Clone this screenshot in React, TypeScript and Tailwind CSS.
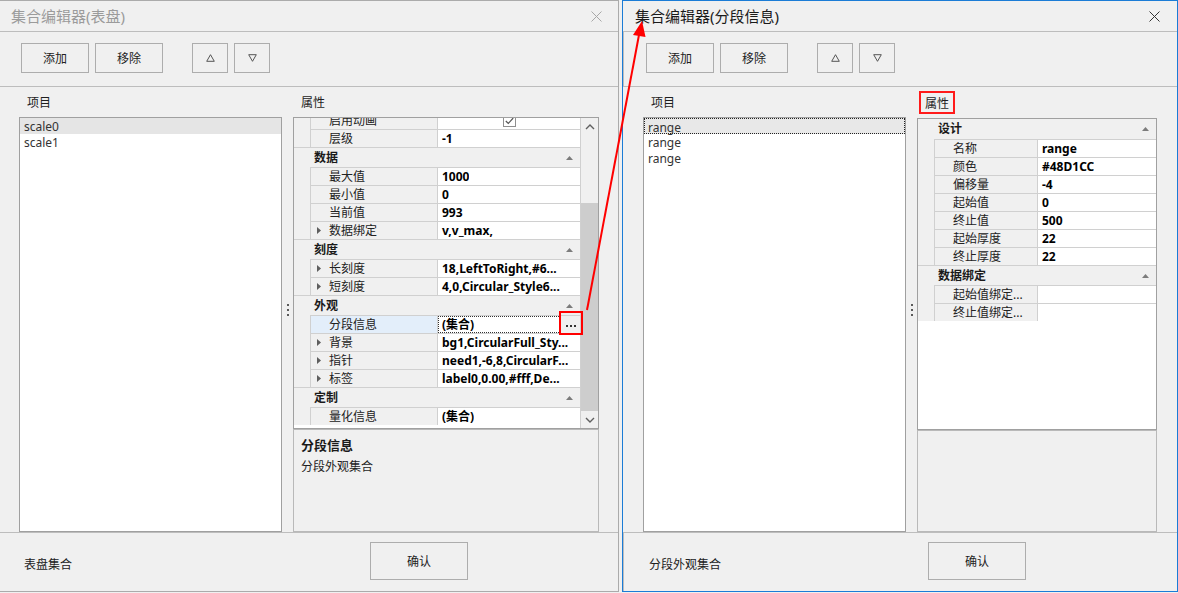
import React from "react";

type GridItem =
  | { t: "cat"; label: string }
  | {
      t: "row";
      name: string;
      value?: string;
      expand?: boolean;
      selected?: boolean;
      check?: boolean;
      ellipsis?: boolean;
    };

const leftItems: GridItem[] = [
  { t: "row", name: "启用动画", check: true },
  { t: "row", name: "层级", value: "-1" },
  { t: "cat", label: "数据" },
  { t: "row", name: "最大值", value: "1000" },
  { t: "row", name: "最小值", value: "0" },
  { t: "row", name: "当前值", value: "993" },
  { t: "row", name: "数据绑定", value: "v,v_max,", expand: true },
  { t: "cat", label: "刻度" },
  { t: "row", name: "长刻度", value: "18,LeftToRight,#6...", expand: true },
  { t: "row", name: "短刻度", value: "4,0,Circular_Style6...", expand: true },
  { t: "cat", label: "外观" },
  { t: "row", name: "分段信息", value: "(集合)", selected: true, ellipsis: true },
  { t: "row", name: "背景", value: "bg1,CircularFull_Sty...", expand: true },
  { t: "row", name: "指针", value: "need1,-6,8,CircularF...", expand: true },
  { t: "row", name: "标签", value: "label0,0.00,#fff,De...", expand: true },
  { t: "cat", label: "定制" },
  { t: "row", name: "量化信息", value: "(集合)" },
];

const rightItems: GridItem[] = [
  { t: "cat", label: "设计" },
  { t: "row", name: "名称", value: "range" },
  { t: "row", name: "颜色", value: "#48D1CC" },
  { t: "row", name: "偏移量", value: "-4" },
  { t: "row", name: "起始值", value: "0" },
  { t: "row", name: "终止值", value: "500" },
  { t: "row", name: "起始厚度", value: "22" },
  { t: "row", name: "终止厚度", value: "22" },
  { t: "cat", label: "数据绑定" },
  { t: "row", name: "起始值绑定...", value: "" },
  { t: "row", name: "终止值绑定...", value: "" },
];

function Caret() {
  return (
    <svg width="4" height="7" viewBox="0 0 4 7">
      <path d="M0 0 L4 3.5 L0 7Z" fill="#5e5e5e" />
    </svg>
  );
}

function CatArrow() {
  return (
    <svg width="7" height="4" viewBox="0 0 7 4">
      <path d="M0 4 L3.5 0 L7 4Z" fill="#7c7c7c" />
    </svg>
  );
}

function XIcon({ color }: { color: string }) {
  return (
    <svg width="11" height="11" viewBox="0 0 11 11">
      <path d="M0.5 0.5L10.5 10.5M10.5 0.5L0.5 10.5" stroke={color} strokeWidth="1" />
    </svg>
  );
}

function TriBtn({ up }: { up: boolean }) {
  return (
    <div className="w-[36px] h-[30px] border border-[#adadad] flex items-center justify-center">
      <svg width="9" height="8" viewBox="0 0 9 8">
        {up ? (
          <path d="M4.5 0.7 L8.3 7.3 L0.7 7.3Z" fill="none" stroke="#555" strokeWidth="1" />
        ) : (
          <path d="M0.7 0.7 L8.3 0.7 L4.5 7.3Z" fill="none" stroke="#555" strokeWidth="1" />
        )}
      </svg>
    </div>
  );
}

function TextBtn({ label }: { label: string }) {
  return (
    <div className="w-[68px] h-[30px] border border-[#adadad] flex items-center justify-center pt-[2px] text-[#222]">
      {label}
    </div>
  );
}

function Chevron({ up }: { up: boolean }) {
  return (
    <svg width="10" height="6" viewBox="0 0 10 6">
      <path
        d={up ? "M1 5 L5 1 L9 5" : "M1 1 L5 5 L9 1"}
        fill="none"
        stroke="#606060"
        strokeWidth="1.4"
      />
    </svg>
  );
}

function Dots() {
  return (
    <div className="flex flex-col items-center gap-[3px]">
      <div className="w-[2px] h-[2px] bg-[#5a5a5a]" />
      <div className="w-[2px] h-[2px] bg-[#5a5a5a]" />
      <div className="w-[2px] h-[2px] bg-[#5a5a5a]" />
    </div>
  );
}

function PropGrid({
  items,
  wide,
}: {
  items: GridItem[];
  wide: boolean;
}) {
  return (
    <div
      className={`h-[312px] shrink-0 border border-[#a0a0a0] bg-white flex overflow-hidden ${
        wide ? "" : "mt-[1px]"
      }`}
    >
      <div className="flex-1 min-w-0 overflow-hidden">
        <div className={wide ? "-mt-[7px]" : ""}>
          {items.map((it, i) => {
            if (it.t === "cat") {
              return (
                <div
                  key={i}
                  className={`h-[20px] bg-[#f0f0f0] flex items-center justify-between pl-[20px] pr-[7px] font-bold text-[#1a1a1a] ${
                    i === 0 ? "" : "border-t border-[#d0d0d0]"
                  }`}
                >
                  <span>{it.label}</span>
                  <CatArrow />
                </div>
              );
            }
            return (
              <div key={i} className="flex h-[18px]">
                <div className="w-[16px] shrink-0 bg-[#f0f0f0]" />
                <div
                  className={`${
                    wide ? "w-[127px]" : "w-[103px]"
                  } shrink-0 border-l border-t border-[#d0d0d0] flex items-center pl-[6px] whitespace-nowrap overflow-hidden ${
                    it.selected ? "bg-[#e3eefa]" : "bg-[#f0f0f0]"
                  }`}
                >
                  <span className="w-[12px] shrink-0 flex items-center">
                    {it.expand ? <Caret /> : null}
                  </span>
                  <span className="text-[#222]">{it.name}</span>
                </div>
                <div className="flex-1 min-w-0 border-l border-t border-[#d0d0d0] bg-white flex items-center">
                  {it.check ? (
                    <div className="flex-1 flex justify-center">
                      <div className="w-[13px] h-[13px] border border-[#8f8f8f] bg-white flex items-center justify-center">
                        <svg width="9" height="8" viewBox="0 0 9 8">
                          <path d="M0.8 4 L3.3 6.5 L8.2 1" fill="none" stroke="#555" strokeWidth="1.2" />
                        </svg>
                      </div>
                    </div>
                  ) : it.ellipsis ? (
                    <div className="flex-1 h-full flex">
                      <div className="flex-1 border border-dotted border-[#333] flex items-center pl-[3px] font-bold text-black whitespace-nowrap">
                        {it.value}
                      </div>
                      <div className="w-[19px] h-full bg-[#f0f0f0] flex items-center justify-center gap-[2px] pt-[2px]">
                        <div className="w-[2px] h-[2px] bg-[#333]" />
                        <div className="w-[2px] h-[2px] bg-[#333]" />
                        <div className="w-[2px] h-[2px] bg-[#333]" />
                      </div>
                    </div>
                  ) : (
                    <span className="pl-[4px] font-bold text-black whitespace-nowrap overflow-hidden">
                      {it.value}
                    </span>
                  )}
                </div>
              </div>
            );
          })}
        </div>
      </div>
      {wide ? (
        <div className="w-[18px] shrink-0 bg-[#f0f0f0] border-l border-[#d0d0d0] flex flex-col">
          <div className="h-[17px] flex items-center justify-center">
            <Chevron up />
          </div>
          <div className="flex-1 flex flex-col">
            <div className="h-[68px]" />
            <div className="flex-1 bg-[#cdcdcd]" />
          </div>
          <div className="h-[17px] flex items-center justify-center">
            <Chevron up={false} />
          </div>
        </div>
      ) : null}
    </div>
  );
}

function Window({ active }: { active: boolean }) {
  const title = active ? "集合编辑器(分段信息)" : "集合编辑器(表盘)";
  const listItems = active ? ["range", "range", "range"] : ["scale0", "scale1"];
  return (
    <div
      className={`h-[592px] shrink-0 flex flex-col ${
        active
          ? "w-[556px] border border-[#1b7cd6]"
          : "w-[619px] border-t border-r border-b border-[#ababab]"
      }`}
    >
      {/* Title bar */}
      <div
        className={`h-[30px] shrink-0 flex items-center justify-between ${
          active ? "pl-[12px] pr-[17px]" : "pl-[11px] pr-[16px]"
        }`}
      >
        <span className={`text-[15px] ${active ? "text-[#1a1a1a]" : "text-[#9b9b9b]"}`}>
          {title}
        </span>
        <XIcon color={active ? "#333333" : "#a8a8a8"} />
      </div>

      {/* Toolbar */}
      <div
        className={`h-[56px] shrink-0 border-t border-b border-[#bdbdbd] flex items-start pt-[11px] ${
          active ? "pl-[22px] border-l" : "pl-[21px]"
        }`}
      >
        <TextBtn label="添加" />
        <div className="w-[6px]" />
        <TextBtn label="移除" />
        <div className="w-[29px]" />
        <TriBtn up />
        <div className="w-[6px]" />
        <TriBtn up={false} />
      </div>

      {/* Main */}
      <div className={`h-[445px] shrink-0 flex ${active ? "pl-[20px]" : "pl-[19px]"}`}>
        <div className="w-[263px] flex flex-col">
          <div className="h-[30px] shrink-0 flex items-center pl-[8px] pt-[2px] text-[#1e1e1e]">项目</div>
          <div className="flex-1 border border-[#a0a0a0] bg-white">
            {listItems.map((t, i) => (
              <div
                key={i}
                className={`h-[16px] leading-[17px] text-[#333] ${
                  i === 0
                    ? active
                      ? "bg-[#e8e8e8] border border-dotted border-[#222] pl-[3px] leading-[15px]"
                      : "bg-[#e5e5e5] pl-[4px]"
                    : "pl-[4px]"
                }`}
              >
                {t}
              </div>
            ))}
          </div>
        </div>
        <div className="w-[11px] shrink-0 flex items-center justify-center">
          <Dots />
        </div>
        <div className={`${active ? "w-[240px]" : "w-[306px]"} flex flex-col`}>
          <div className="h-[30px] shrink-0 flex items-center">
            {active ? (
              <div className="ml-[2px] mt-[1px] h-[23px] border-2 border-[#ff1a1a] px-[4px] pt-[2px] flex items-center text-[#1e1e1e]">
                属性
              </div>
            ) : (
              <div className="pl-[8px] pt-[2px] text-[#1e1e1e]">属性</div>
            )}
          </div>
          <PropGrid items={active ? rightItems : leftItems} wide={!active} />
          <div className="flex-1 border border-[#b9b9b9] bg-[#f0f0f0] pt-[7px] pl-[7px]">
            {active ? null : (
              <>
                <div className="font-bold leading-[16px] text-[13px] text-[#1a1a1a]">分段信息</div>
                <div className="mt-[6px] leading-[16px] text-[#1e1e1e]">分段外观集合</div>
              </>
            )}
          </div>
        </div>
      </div>

      {/* Bottom */}
      <div
        className={`flex-1 border-t border-[#bdbdbd] flex items-start justify-between pt-[9px] ${
          active ? "pl-[25px] pr-[151px] border-l" : "pl-[24px] pr-[150px]"
        }`}
      >
        <span className="mt-[15px] leading-[16px] text-[#222]">
          {active ? "分段外观集合" : "表盘集合"}
        </span>
        <div className="w-[98px] h-[38px] border border-[#adadad] flex items-center justify-center pt-[2px] text-[#222]">
          确认
        </div>
      </div>
    </div>
  );
}

export default function App() {
  return (
    <div className="relative w-[1178px] h-[593px] overflow-hidden bg-[#f0f0f0] flex gap-[3px] text-[12px] text-[#1e1e1e] font-['Noto_Sans','Noto_Sans_CJK_SC',sans-serif]">
      <Window active={false} />
      <Window active />
      <svg
        className="absolute left-0 top-0 pointer-events-none"
        width="1178"
        height="593"
        viewBox="0 0 1178 593"
      >
        <line x1="587" y1="310" x2="639" y2="35" stroke="#ff0000" strokeWidth="2" />
        <polygon points="642,21 645.5,37 633,35" fill="#ff0000" />
        <rect x="560" y="312" width="22" height="22" fill="none" stroke="#ff0000" strokeWidth="2" />
      </svg>
    </div>
  );
}
